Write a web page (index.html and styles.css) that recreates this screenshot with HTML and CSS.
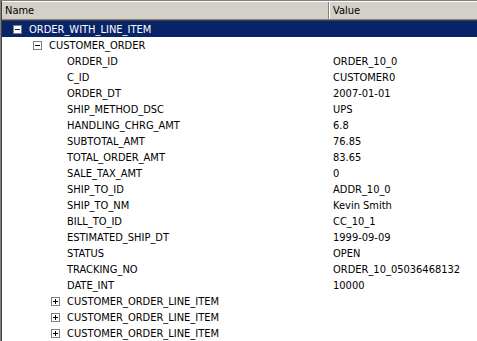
FILE: index.html
```html
<!DOCTYPE html>
<html>
<head>
<meta charset="utf-8">
<link rel="stylesheet" href="styles.css">
</head>
<body>
<div class="tree">
  <div class="header">
    <div class="hcell hname">Name</div>
    <div class="hcell hvalue">Value</div>
  </div>
  <div class="rows">
    <div class="row selected l0"><div class="name"><span class="box minus"></span><span class="label">ORDER_WITH_LINE_ITEM</span></div><div class="value"></div></div>
    <div class="row l1"><div class="name"><span class="box minus"></span><span class="label">CUSTOMER_ORDER</span></div><div class="value"></div></div>
    <div class="row l2"><div class="name"><span class="box none"></span><span class="label">ORDER_ID</span></div><div class="value">ORDER_10_0</div></div>
    <div class="row l2"><div class="name"><span class="box none"></span><span class="label">C_ID</span></div><div class="value">CUSTOMER0</div></div>
    <div class="row l2"><div class="name"><span class="box none"></span><span class="label">ORDER_DT</span></div><div class="value">2007-01-01</div></div>
    <div class="row l2"><div class="name"><span class="box none"></span><span class="label">SHIP_METHOD_DSC</span></div><div class="value">UPS</div></div>
    <div class="row l2"><div class="name"><span class="box none"></span><span class="label">HANDLING_CHRG_AMT</span></div><div class="value">6.8</div></div>
    <div class="row l2"><div class="name"><span class="box none"></span><span class="label">SUBTOTAL_AMT</span></div><div class="value">76.85</div></div>
    <div class="row l2"><div class="name"><span class="box none"></span><span class="label">TOTAL_ORDER_AMT</span></div><div class="value">83.65</div></div>
    <div class="row l2"><div class="name"><span class="box none"></span><span class="label">SALE_TAX_AMT</span></div><div class="value">0</div></div>
    <div class="row l2"><div class="name"><span class="box none"></span><span class="label">SHIP_TO_ID</span></div><div class="value">ADDR_10_0</div></div>
    <div class="row l2"><div class="name"><span class="box none"></span><span class="label">SHIP_TO_NM</span></div><div class="value">Kevin Smith</div></div>
    <div class="row l2"><div class="name"><span class="box none"></span><span class="label">BILL_TO_ID</span></div><div class="value">CC_10_1</div></div>
    <div class="row l2"><div class="name"><span class="box none"></span><span class="label">ESTIMATED_SHIP_DT</span></div><div class="value">1999-09-09</div></div>
    <div class="row l2"><div class="name"><span class="box none"></span><span class="label">STATUS</span></div><div class="value">OPEN</div></div>
    <div class="row l2"><div class="name"><span class="box none"></span><span class="label">TRACKING_NO</span></div><div class="value">ORDER_10_05036468132</div></div>
    <div class="row l2"><div class="name"><span class="box none"></span><span class="label">DATE_INT</span></div><div class="value">10000</div></div>
    <div class="row l2"><div class="name"><span class="box plus"></span><span class="label">CUSTOMER_ORDER_LINE_ITEM</span></div><div class="value"></div></div>
    <div class="row l2"><div class="name"><span class="box plus"></span><span class="label">CUSTOMER_ORDER_LINE_ITEM</span></div><div class="value"></div></div>
    <div class="row l2"><div class="name"><span class="box plus"></span><span class="label">CUSTOMER_ORDER_LINE_ITEM</span></div><div class="value"></div></div>
  </div>
</div>
</body>
</html>
```

FILE: styles.css
```css
html, body {
  margin: 0;
  padding: 0;
  background: #ffffff;
}
body {
  width: 477px;
  height: 341px;
  overflow: hidden;
  font-family: "DejaVu Sans Condensed", "DejaVu Sans", sans-serif;
  font-size: 11px;
  color: #000000;
}
.tree {
  border-left: 1px solid #808080;
  border-top: 1px solid #808080;
  box-shadow: inset 1px 0 0 #404040;
  height: 340px;
  padding-left: 1px;
}
.header {
  display: flex;
  height: 19px;
  background: #d4d0c8;
  box-sizing: border-box;
  border-top: 1px solid #ffffff;
  border-bottom: 1px solid #808080;
  box-shadow: 0 1px 0 #404040;
  margin-bottom: 1px;
}
.hcell {
  display: flex;
  align-items: center;
  box-sizing: border-box;
}
.hname {
  width: 327px;
  padding-left: 3px;
  border-right: 1px solid #808080;
}
.hvalue {
  flex: 1;
  padding-left: 3px;
  border-left: 1px solid #ffffff;
}
.row {
  display: flex;
  height: 16px;
  align-items: center;
}
.row .name {
  width: 327px;
  display: flex;
  align-items: center;
  box-sizing: border-box;
}
.row .value {
  flex: 1;
  padding-left: 4px;
  white-space: nowrap;
}
.l0 .name { padding-left: 11px; }
.l1 .name { padding-left: 31px; }
.l2 .name { padding-left: 49px; }
.box {
  width: 9px;
  height: 9px;
  box-sizing: border-box;
  margin-right: 7px;
  position: relative;
  flex: none;
}
.minus, .plus {
  border: 1px solid #808080;
  background: #ffffff;
}
.minus::before, .plus::before {
  content: "";
  position: absolute;
  left: 1px;
  top: 3px;
  width: 5px;
  height: 1px;
  background: #000000;
}
.plus::after {
  content: "";
  position: absolute;
  left: 3px;
  top: 1px;
  width: 1px;
  height: 5px;
  background: #000000;
}
.selected {
  background: #0a246a;
  color: #ffffff;
}
.selected .minus::before {
  background: #0a246a;
}
.label {
  white-space: nowrap;
}
```
